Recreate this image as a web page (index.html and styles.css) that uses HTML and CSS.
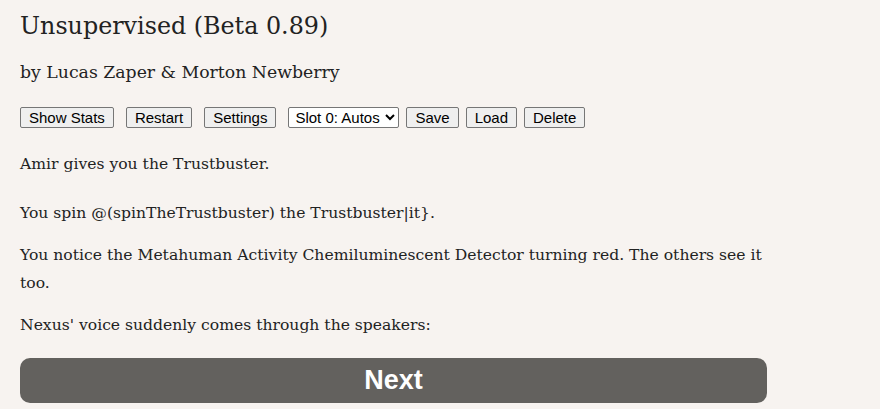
FILE: index.html
```html
<!DOCTYPE html>
<html lang="en">
<head>
  <meta charset="UTF-8">
  <title>Unsupervised (Beta 0.89)</title>
  <link rel="stylesheet" href="styles.css">
</head>
<body>
  <div class="story">
    <h1>Unsupervised (Beta 0.89)</h1>
    <p class="byline">by Lucas Zaper &amp; Morton Newberry</p>

    <div class="toolbar">
      <button class="wide">Show Stats</button>
      <button class="wide">Restart</button>
      <button class="wide">Settings</button>
      <select>
        <option>Slot 0: Autos</option>
      </select>
      <button>Save</button>
      <button>Load</button>
      <button>Delete</button>
    </div>

    <div class="passage">
      <p class="first">Amir gives you the Trustbuster.</p>
      <p class="spin">You spin @(spinTheTrustbuster) the Trustbuster|it}.</p>
      <p>You notice the Metahuman Activity Chemiluminescent Detector turning red. The others see it too.</p>
      <p>Nexus' voice suddenly comes through the speakers:</p>
    </div>

    <button class="next">Next</button>
  </div>
</body>
</html>
```

FILE: styles.css
```css
body {
  margin: 0;
  padding: 0 20px;
  background-color: #f7f3f0;
  color: #222;
  font-family: 'DejaVu Serif', serif;
}

.story {
  width: 747px;
}

h1 {
  font-size: 23.8px;
  font-weight: normal;
  margin: 9px 0 0;
  line-height: 34px;
}

.byline {
  font-size: 17.3px;
  margin: 17px 0 0;
  line-height: 24px;
}

.toolbar {
  display: flex;
  align-items: center;
  margin-top: 23px;
  gap: 7px;
}

.toolbar button,
.toolbar select {
  font-family: 'Liberation Sans', Arial, sans-serif;
  font-size: 15px;
  height: 21px;
  padding: 0 8px;
  background: #efefef;
  border: 1px solid #767676;
  border-radius: 2px;
  color: #000;
}

.toolbar .wide {
  margin-right: 5px;
}

.toolbar select {
  background: #fff;
  padding: 0 2px;
  width: 111px;
}

.passage {
  font-size: 15.6px;
  line-height: 28px;
}

.passage p {
  margin: 14px 0 0;
}

.passage .first {
  margin-top: 22px;
}

.passage .spin {
  margin-top: 21px;
}

.next {
  display: block;
  width: 100%;
  height: 45px;
  margin-top: 19px;
  border: none;
  border-radius: 10px;
  background-color: #63615e;
  color: #fff;
  font-family: 'Liberation Sans', Arial, sans-serif;
  font-size: 27px;
  font-weight: bold;
}
```
